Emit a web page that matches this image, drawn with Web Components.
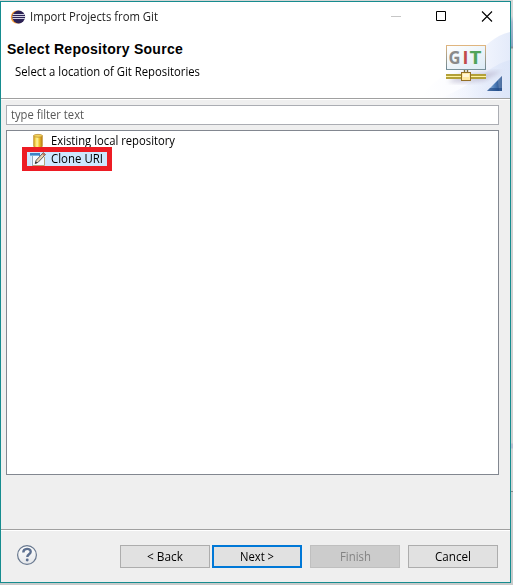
<!DOCTYPE html>
<html lang="en"><head><meta charset="utf-8"><title>Import Projects from Git</title>
<style>
html,body{margin:0;width:513px;height:585px;overflow:hidden}
body{font:12px/16px "Open Sans","Noto Sans",sans-serif;color:#000;background:linear-gradient(#d4d6d6 0 16px,#a9b9cd 22px,#8ba3bf 46px,#8b8f96 47px 48px,#cfd1d1 49px 443px,#b9bccd 444px 448px,#d2d4d4 449px 491px,#85898a 491px 492px,#c8cbcb 492px)}
</style></head><body>
<wizard-window>
  <title-bar slot="title"><fit-text width="128">Import Projects from Git</fit-text></title-bar>
  <wizard-banner slot="banner">
    <fit-text slot="heading" width="176" spaced>Select Repository Source</fit-text>
    <fit-text slot="message" width="185">Select a location of Git Repositories</fit-text>
    <git-logo slot="logo"></git-logo>
  </wizard-banner>
  <filter-field><fit-text width="73">type filter text</fit-text></filter-field>
  <source-tree>
    <tree-row><ui-icon slot="icon" name="db"></ui-icon><fit-text width="124">Existing local repository</fit-text></tree-row>
    <tree-row selected><ui-icon slot="icon" name="edit"></ui-icon><fit-text width="52">Clone URI</fit-text></tree-row>
  </source-tree>
  <wizard-footer slot="footer">
    <push-button><fit-text width="36">&lt; Back</fit-text></push-button>
    <push-button default style="margin-left:2px"><fit-text width="34">Next &gt;</fit-text></push-button>
    <push-button disabled style="margin-left:8px"><fit-text width="31">Finish</fit-text></push-button>
    <push-button style="margin-left:8px"><fit-text width="36">Cancel</fit-text></push-button>
  </wizard-footer>
</wizard-window>
<script>
const define=(name,html)=>customElements.define(name,class extends HTMLElement{
  constructor(){super();this.attachShadow({mode:'open'}).innerHTML=html}
});
const icons={
db:`<svg width="16" height="16" viewBox="0 0 16 16"><defs><linearGradient id="g"><stop stop-color="#c99b2d"/><stop offset=".2" stop-color="#f6d44c"/><stop offset=".4" stop-color="#fff3a0"/><stop offset=".65" stop-color="#f0c32e"/><stop offset="1" stop-color="#b37a16"/></linearGradient></defs><path d="M3.7 2.5v10.7c0 1 2 1.4 4.3 1.4s4.3-.4 4.3-1.4V2.5z" fill="url(#g)" stroke="#c4922c" stroke-width=".8"/><ellipse cx="8" cy="2.8" rx="4.3" ry="1.4" fill="#f5d65d" stroke="#bd8f35" stroke-width=".8"/></svg>`,
edit:`<svg width="16" height="16" viewBox="0 0 16 16"><path d="M1.5 3.5h13v11h-13z" fill="#f4faff"/><path d="M14.5 6v8.5h-12" fill="none" stroke="#b4a67c"/><path d="M0 2h10v3H0z" fill="#3f83c4"/><path d="M0 4h9v1H0z" fill="#79b3df"/><path d="M2.5 5v10" stroke="#93a9b8"/><path d="M5.2 12.5l1-3.3 7.2-7.6 2 2-7.3 7.7z" fill="#ead5b4" stroke="#4f4a49" stroke-width=".9"/><path d="M12 3l2 2 1.5-1.5-2-2z" fill="#b97761"/><path d="M5.2 12.5l.6-2 1.5 1.4z" fill="#222"/></svg>`,
eclipse:`<svg width="16" height="16" viewBox="0 0 16 16"><circle cx="7.4" cy="8" r="6.6" fill="#f39a36"/><circle cx="8.7" cy="8" r="6.4" fill="#2c2255"/><path d="M3 5.5h11.6M2.3 7.5h12.8M2.6 9.5h12.2" stroke="#e6e6f3" stroke-width=".9"/></svg>`,
help:`<svg width="22" height="22" viewBox="0 0 22 22"><defs><linearGradient id="h" x2="0" y2="1"><stop stop-color="#fff"/><stop offset="1" stop-color="#e4e6e9"/></linearGradient></defs><circle cx="11" cy="11" r="9.4" fill="url(#h)" stroke="#68788f" stroke-width="1.2"/><path d="M7.3 8.4C7.3 3.8 14.7 3.8 14.7 7.7c0 2.5-3.4 2.5-3.4 5.2" fill="none" stroke="#5d7090" stroke-width="2.4"/><circle cx="11.2" cy="16" r="1.45" fill="#5d7090"/></svg>`
};
customElements.define('ui-icon',class extends HTMLElement{
  constructor(){super();this.attachShadow({mode:'open'})}
  connectedCallback(){this.shadowRoot.innerHTML='<style>:host,svg{display:block;flex:none}</style>'+icons[this.getAttribute('name')]}
});
define('wizard-window',`<style>
:host{display:flex;flex-direction:column;box-sizing:border-box;width:511px;height:582px;margin-top:1px;border:1px solid #168c8f;background:#efefef;position:relative}
.top{height:96px;flex:none;background:#fff;border-bottom:1px solid #a0a0a0;box-shadow:0 1px #fff;position:relative;overflow:hidden}
.wave{position:absolute;right:0;top:0}
.inner{position:relative}
main{flex:1;display:flex;flex-direction:column;gap:5px;padding:6px 11px 54px 5px}
</style><div class="top"><svg class="wave" width="109" height="96" viewBox="0 0 109 96"><defs><linearGradient id="w"><stop stop-color="#fff"/><stop offset=".5" stop-color="#fafbff"/><stop offset="1" stop-color="#e4ebfa"/></linearGradient><linearGradient id="v"><stop stop-color="#d9e3f8" stop-opacity="0"/><stop offset="1" stop-color="#d9e3f8"/></linearGradient></defs><path d="M109 30C92 34 86 44 72 54S30 78 20 96H109z" fill="url(#w)"/><path d="M109 58C90 62 78 80 40 96H109z" fill="url(#v)" opacity=".7"/></svg><div class="inner"><slot name="title"></slot><slot name="banner"></slot></div></div><main><slot></slot></main><slot name="footer"></slot>`);
define('title-bar',`<style>
:host{display:flex;align-items:center;height:30px;padding-left:9px;color:#222}
ui-icon{margin-right:4px}.controls{margin-left:auto}
</style><ui-icon name="eclipse"></ui-icon><slot></slot><svg class="controls" width="120" height="30" viewBox="0 0 120 30"><path d="M1 14.5h10" stroke="#c6c6c6"/><path d="M46.5 9.5h9v9h-9z" fill="none" stroke="#000"/><path d="M92 9.5l10 10m0-10l-10 10" stroke="#000" stroke-width="1.1"/></svg>`);
define('wizard-banner',`<style>
:host{display:flex;justify-content:space-between}
.copy{padding:9px 0 0 6px}
.h{font:bold 14px/16px "Liberation Sans",Arial,sans-serif}
.m{padding:7px 0 0 8px}
</style><div class="copy"><div class="h"><slot name="heading"></slot></div><div class="m"><slot name="message"></slot></div></div><slot name="logo"></slot>`);
define('git-logo',`<style>:host{display:block;margin:10px 0 0}svg{display:block}text{font:bold 17px "Open Sans",sans-serif}</style>
<svg width="69" height="56" viewBox="441 42 69 56"><defs><linearGradient id="b" x2="0" y2="1"><stop stop-color="#dfb57f"/><stop offset="1" stop-color="#6a8796"/></linearGradient><linearGradient id="f" x2="1" y2="1"><stop stop-color="#fff"/><stop offset="1" stop-color="#dcebf6"/></linearGradient><linearGradient id="t"><stop stop-color="#a9c4e2"/><stop offset=".5" stop-color="#4f7fba"/><stop offset="1" stop-color="#1d4480"/></linearGradient><filter id="s"><feGaussianBlur stdDeviation="2"/></filter></defs>
<path d="M448 82l12-8 42-3-18 10-22 2z" fill="#b6b2ca" opacity=".6" filter="url(#s)"/>
<rect x="446.5" y="45.5" width="39" height="24" fill="url(#f)" stroke="url(#b)"/><path d="M446 69.5h40" stroke="#78919a"/>
<text x="448.5" y="64" fill="#8a8a8a" textLength="12" lengthAdjust="spacingAndGlyphs">G</text><text x="462.5" y="64" fill="#c14b4b" textLength="6" lengthAdjust="spacingAndGlyphs">I</text><text x="469.5" y="64" fill="#50a45a" textLength="12" lengthAdjust="spacingAndGlyphs">T</text>
<path d="M446 74h40v5h-40z" fill="#b3a038"/><path d="M446 76.5h40" stroke="#fff3a0"/><path d="M464.5 70v3m3-3v3" stroke="#7d7139" stroke-width="1.4"/><rect x="461.5" y="72.5" width="9" height="8" fill="#ffe8a1" stroke="#947027"/><path d="M463 74h6v3h-6z" fill="#fff6d9"/>
<path d="M502 76v15h-15z" fill="url(#t)"/><path d="M502 76v15h-3l-1-11z" fill="#a5bedb" opacity=".35"/><path d="M487 91l3-3h12v3z" fill="#1d4684" opacity=".65"/></svg>`);
define('filter-field',`<style>:host{display:flex;box-sizing:border-box;height:20px;align-items:center;border:1px solid #abadb3;background:#fff;padding-left:4px;color:#585858;flex:none}</style><slot></slot>`);
define('source-tree',`<style>:host{display:block;box-sizing:border-box;flex:1;border:1px solid #828790;background:#fff;padding:1px 0 0 15px}</style><slot></slot>`);
define('tree-row',`<style>
:host{display:flex;align-items:center;height:18px;padding-left:8px;position:relative}
.label{margin-left:3px;display:flex;align-items:center;height:16px;padding:0 2px}
:host([selected]) .label{background:#cde8ff}
:host([selected])::after{content:"";position:absolute;left:0;top:-3px;width:90px;height:24px;box-sizing:border-box;border:5px solid #ed1c24}
:host([selected])::before{content:"";position:absolute;left:5px;top:1px;width:80px;height:16px;background:#cde8ff}
::slotted(ui-icon),.label{position:relative}
</style><slot name="icon"></slot><div class="label"><slot></slot></div>`);
define('wizard-footer',`<style>
:host{display:flex;box-sizing:border-box;height:53px;border-top:1px solid #a0a0a0;box-shadow:inset 0 1px #fff;padding:15px 12px 0 15px;align-items:flex-start}
ui-icon{margin-right:auto;margin-top:-1px}
</style><ui-icon name="help"></ui-icon><slot></slot>`);
define('push-button',`<style>
:host{display:flex;box-sizing:border-box;width:90px;height:23px;align-items:center;justify-content:center;border:1px solid #adadad;background:#e1e1e1}
:host([default]){border:2px solid #0078d7}
:host([disabled]){background:#ccc;border-color:#bfbfbf;color:#838383}
</style><slot></slot>`);
/* A single line of text fitted to its width, by scaling its glyphs or, if "spaced", by letter spacing. */
customElements.define('fit-text',class extends HTMLElement{
  constructor(){super();this.attachShadow({mode:'open'}).innerHTML='<style>:host{display:inline-block;white-space:pre;text-align:left}span{white-space:pre;display:inline-block;transform-origin:0 50%}</style><span><slot></slot></span>'}
  connectedCallback(){
    const w=+this.getAttribute('width'),s=this.shadowRoot.querySelector('span'),n=s.getBoundingClientRect().width;
    if(this.hasAttribute('spaced'))s.style.letterSpacing=(w-n)/this.textContent.length+'px';
    else s.style.transform='scaleX('+w/n+')';
    this.style.width=w+'px';
  }
});
</script></body></html>
